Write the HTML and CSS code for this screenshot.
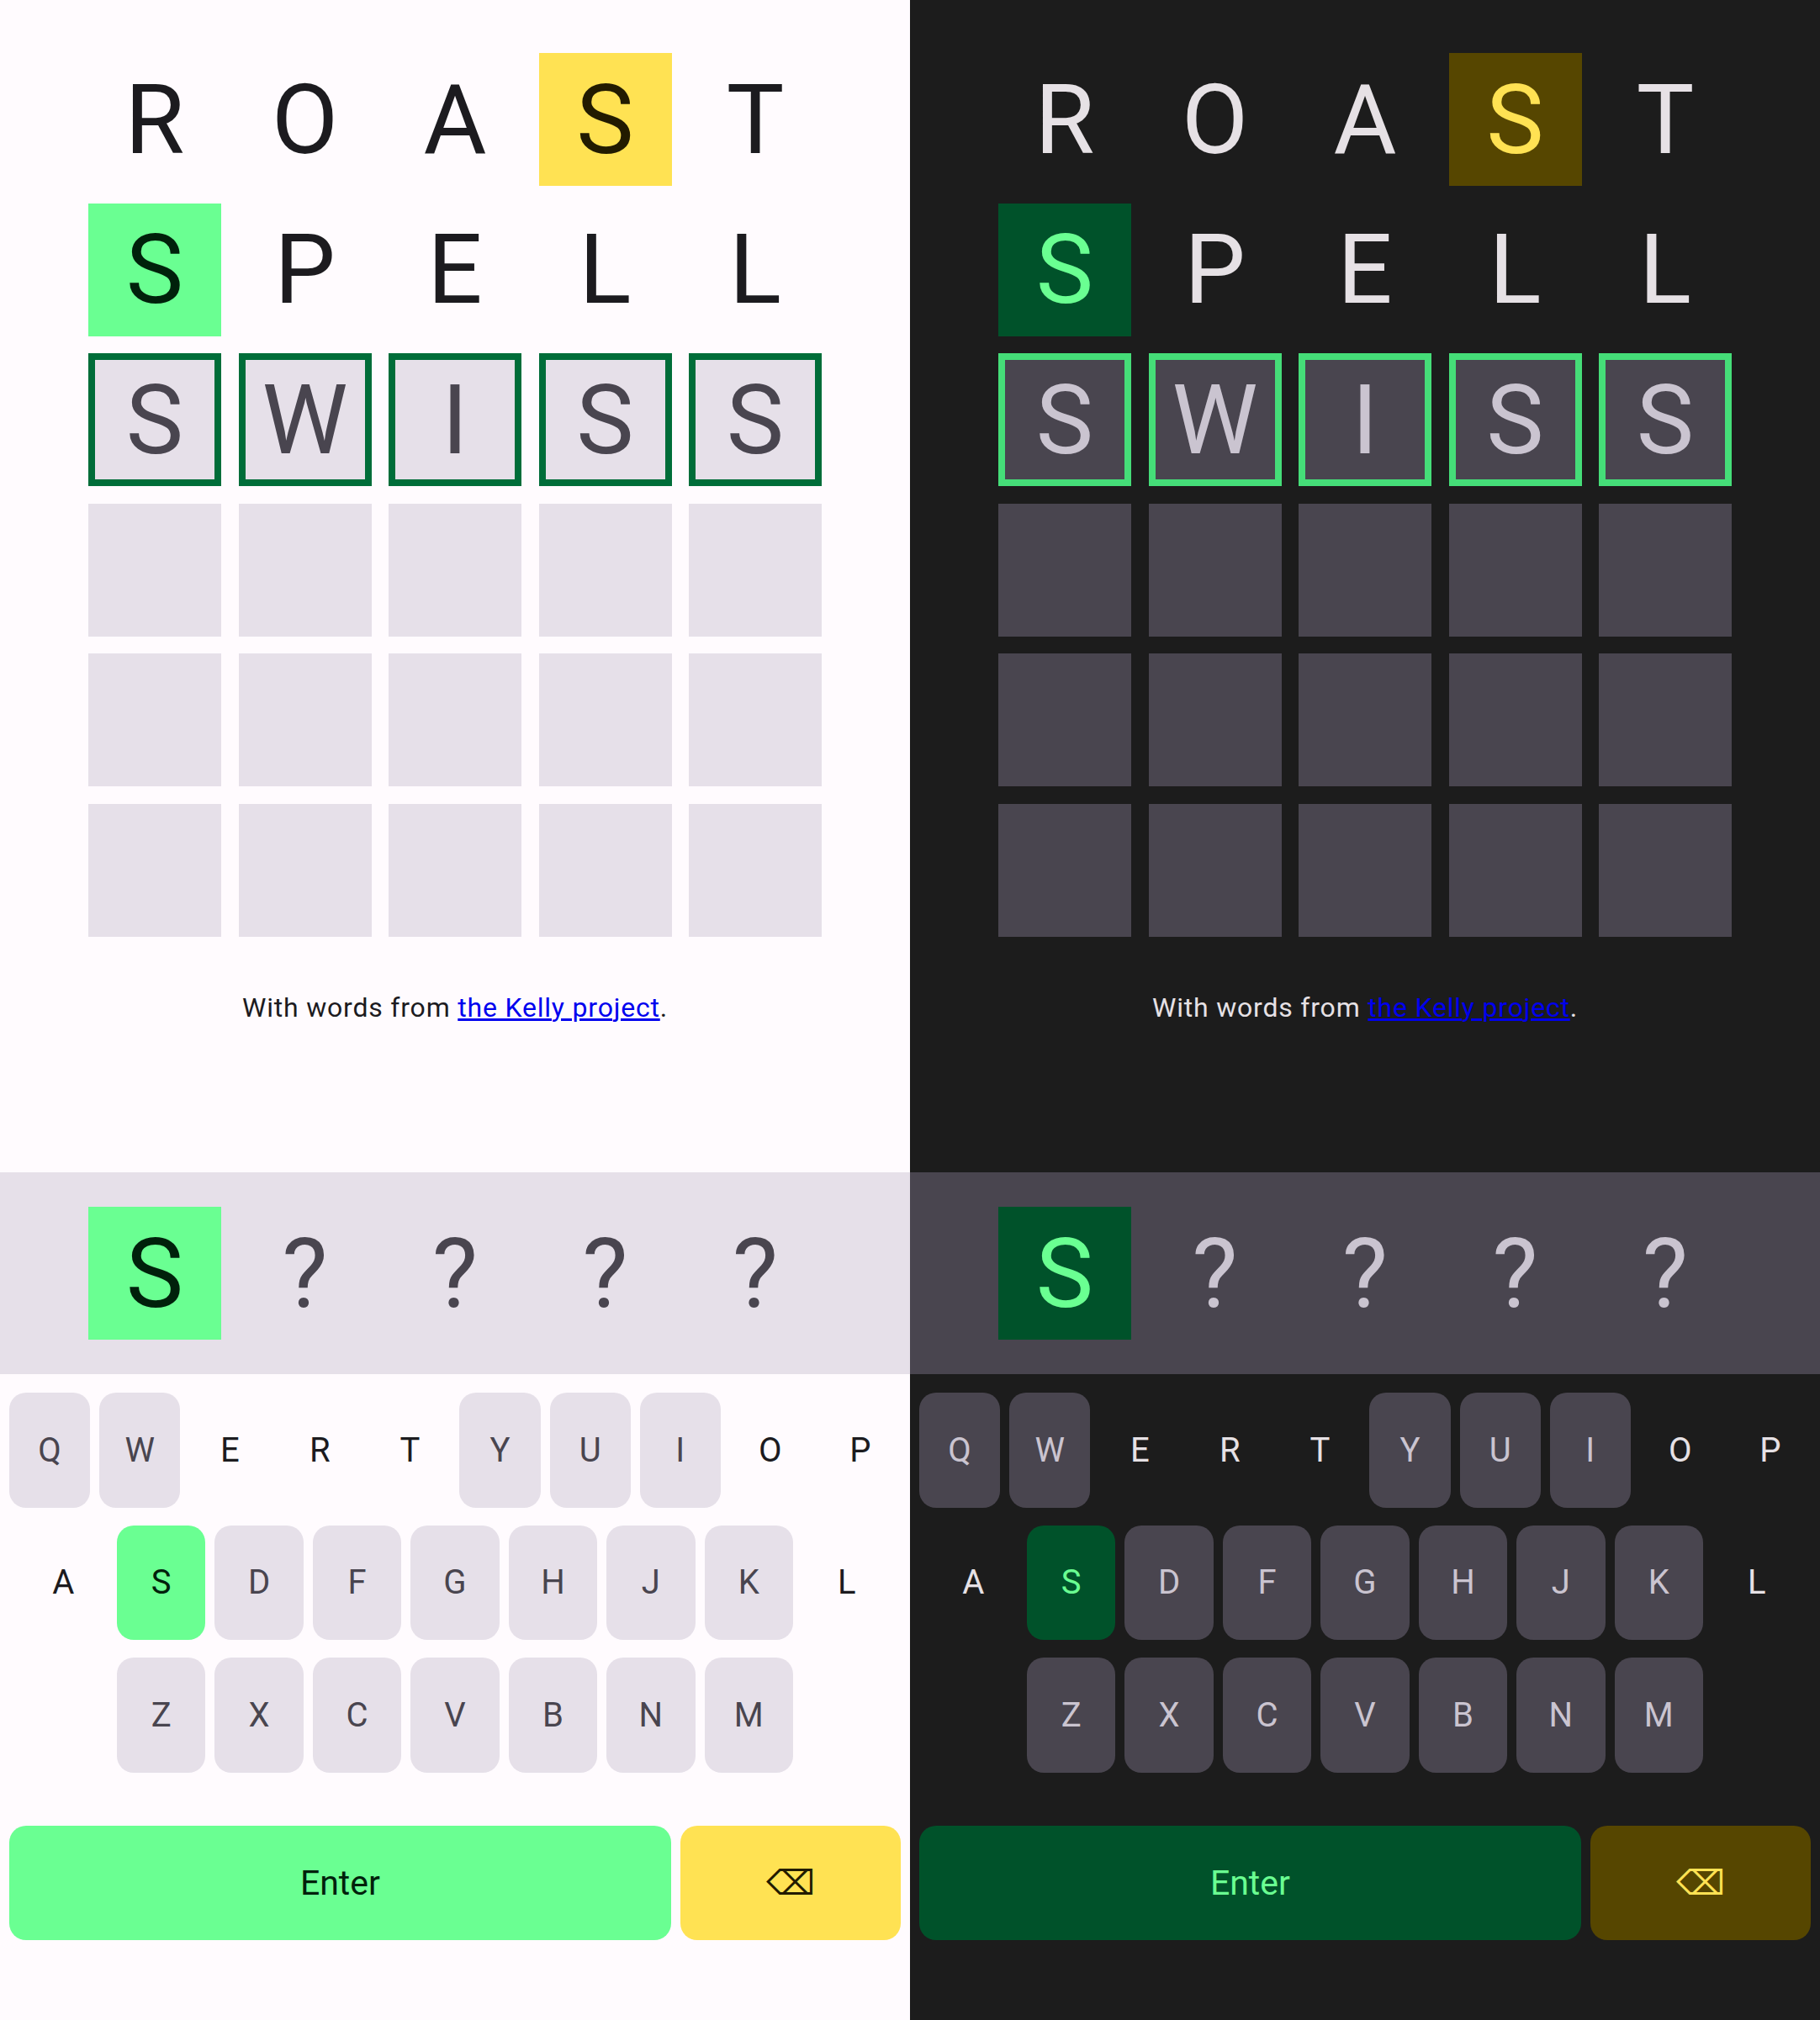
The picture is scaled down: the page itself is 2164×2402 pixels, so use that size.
FILE: index.html
```html
<!DOCTYPE html>
<html lang="en">
<head>
<meta charset="utf-8">
<title>Word game</title>
<link rel="stylesheet" href="styles.css">
</head>
<body>
<div class="screen">
  <section class="panel light">
    <main class="main">
      <div class="board">
        <div class="tile">R</div><div class="tile">O</div><div class="tile">A</div><div class="tile present">S</div><div class="tile">T</div>
        <div class="tile correct">S</div><div class="tile">P</div><div class="tile">E</div><div class="tile">L</div><div class="tile">L</div>
        <div class="tile active">S</div><div class="tile active">W</div><div class="tile active">I</div><div class="tile active">S</div><div class="tile active">S</div>
        <div class="tile empty"></div><div class="tile empty"></div><div class="tile empty"></div><div class="tile empty"></div><div class="tile empty"></div>
        <div class="tile empty"></div><div class="tile empty"></div><div class="tile empty"></div><div class="tile empty"></div><div class="tile empty"></div>
        <div class="tile empty"></div><div class="tile empty"></div><div class="tile empty"></div><div class="tile empty"></div><div class="tile empty"></div>
      </div>
      <p class="credit">With words from <a href="#">the Kelly project</a>.</p>
    </main>
    <div class="hint">
      <div class="board hint-row">
        <div class="tile correct">S</div><div class="tile unknown">?</div><div class="tile unknown">?</div><div class="tile unknown">?</div><div class="tile unknown">?</div>
      </div>
    </div>
    <div class="keyboard">
      <div class="krow krow-10">
        <span class="key">Q</span><span class="key">W</span><span class="key absent">E</span><span class="key absent">R</span><span class="key absent">T</span><span class="key">Y</span><span class="key">U</span><span class="key">I</span><span class="key absent">O</span><span class="key absent">P</span>
      </div>
      <div class="krow krow-9">
        <span class="key absent">A</span><span class="key hit">S</span><span class="key">D</span><span class="key">F</span><span class="key">G</span><span class="key">H</span><span class="key">J</span><span class="key">K</span><span class="key absent">L</span>
      </div>
      <div class="krow krow-9">
        <span class="key first">Z</span><span class="key">X</span><span class="key">C</span><span class="key">V</span><span class="key">B</span><span class="key">N</span><span class="key">M</span>
      </div>
      <div class="krow krow-action">
        <span class="key enter">Enter</span><span class="key back">⌫</span>
      </div>
    </div>
  </section>
  <section class="panel dark">
    <main class="main">
      <div class="board">
        <div class="tile">R</div><div class="tile">O</div><div class="tile">A</div><div class="tile present">S</div><div class="tile">T</div>
        <div class="tile correct">S</div><div class="tile">P</div><div class="tile">E</div><div class="tile">L</div><div class="tile">L</div>
        <div class="tile active">S</div><div class="tile active">W</div><div class="tile active">I</div><div class="tile active">S</div><div class="tile active">S</div>
        <div class="tile empty"></div><div class="tile empty"></div><div class="tile empty"></div><div class="tile empty"></div><div class="tile empty"></div>
        <div class="tile empty"></div><div class="tile empty"></div><div class="tile empty"></div><div class="tile empty"></div><div class="tile empty"></div>
        <div class="tile empty"></div><div class="tile empty"></div><div class="tile empty"></div><div class="tile empty"></div><div class="tile empty"></div>
      </div>
      <p class="credit">With words from <a href="#">the Kelly project</a>.</p>
    </main>
    <div class="hint">
      <div class="board hint-row">
        <div class="tile correct">S</div><div class="tile unknown">?</div><div class="tile unknown">?</div><div class="tile unknown">?</div><div class="tile unknown">?</div>
      </div>
    </div>
    <div class="keyboard">
      <div class="krow krow-10">
        <span class="key">Q</span><span class="key">W</span><span class="key absent">E</span><span class="key absent">R</span><span class="key absent">T</span><span class="key">Y</span><span class="key">U</span><span class="key">I</span><span class="key absent">O</span><span class="key absent">P</span>
      </div>
      <div class="krow krow-9">
        <span class="key absent">A</span><span class="key hit">S</span><span class="key">D</span><span class="key">F</span><span class="key">G</span><span class="key">H</span><span class="key">J</span><span class="key">K</span><span class="key absent">L</span>
      </div>
      <div class="krow krow-9">
        <span class="key first">Z</span><span class="key">X</span><span class="key">C</span><span class="key">V</span><span class="key">B</span><span class="key">N</span><span class="key">M</span>
      </div>
      <div class="krow krow-action">
        <span class="key enter">Enter</span><span class="key back">⌫</span>
      </div>
    </div>
  </section>
</div>
</body>
</html>
```
FILE: styles.css
```css
html, body {
  margin: 0;
  padding: 0;
}

body {
  font-family: Roboto, "Noto Sans", sans-serif;
}

.screen {
  display: flex;
  width: 2164px;
  height: 2402px;
}

.panel {
  width: 1082px;
  height: 2402px;
  display: flex;
  flex-direction: column;
  background: var(--bg);
  color: var(--on-bg);
}

.light {
  --bg: #fffbfe;
  --on-bg: #1c1b1f;
  --surface: #e6e0e9;
  --on-surface: #49454f;
  --yellow: #ffe253;
  --on-yellow: #221b00;
  --green: #6aff92;
  --on-green: #00210b;
  --outline: #006d39;
}

.dark {
  --bg: #1c1c1c;
  --on-bg: #e6e1e5;
  --surface: #49454f;
  --on-surface: #cac4d0;
  --yellow: #564600;
  --on-yellow: #ffe253;
  --green: #00522a;
  --on-green: #6aff92;
  --outline: #45dd78;
}

.main {
  flex: 1;
  padding-top: 63px;
}

.board {
  display: grid;
  grid-template-columns: repeat(5, 158px);
  grid-auto-rows: 158px;
  gap: 20.5px;
  justify-content: center;
}

.tile {
  box-sizing: border-box;
  display: flex;
  align-items: center;
  justify-content: center;
  font-size: 115px;
  line-height: normal;
  color: var(--on-bg);
}

.tile.present {
  background: var(--yellow);
  color: var(--on-yellow);
}

.tile.correct {
  background: var(--green);
  color: var(--on-green);
}

.tile.active {
  background: var(--surface);
  color: var(--on-surface);
  border: 8px solid var(--outline);
}

.tile.empty {
  background: var(--surface);
}

.tile.unknown {
  color: var(--on-surface);
}

.credit {
  margin: 66px 0 0;
  text-align: center;
  font-size: 32px;
  letter-spacing: 0.8px;
  line-height: 36px;
  color: var(--on-bg);
}

.credit a {
  color: #0000ee;
}

.hint {
  background: var(--surface);
  padding: 41px 0;
}

.keyboard {
  padding: 22px 11px 95px;
  display: flex;
  flex-direction: column;
  gap: 21px;
}

.krow {
  display: grid;
  gap: 11px;
  height: 136.5px;
}

.krow-10 {
  grid-template-columns: repeat(10, 1fr);
}

.krow-9 {
  grid-template-columns: repeat(9, 1fr);
  padding: 0 11.5px;
}

.krow-action {
  grid-template-columns: 3fr 1fr;
  margin-top: 42px;
}

.key {
  display: flex;
  align-items: center;
  justify-content: center;
  border-radius: 20px;
  background: var(--surface);
  color: var(--on-surface);
  font-size: 40px;
}

.key.first {
  grid-column-start: 2;
}

.key.absent {
  background: transparent;
  color: var(--on-bg);
}

.key.hit {
  background: var(--green);
  color: var(--on-green);
}

.key.enter {
  background: var(--green);
  color: var(--on-green);
  font-size: 41px;
}

.key.back {
  background: var(--yellow);
  color: var(--on-yellow);
  font-family: "DejaVu Sans", sans-serif;
  font-size: 41px;
}
```
